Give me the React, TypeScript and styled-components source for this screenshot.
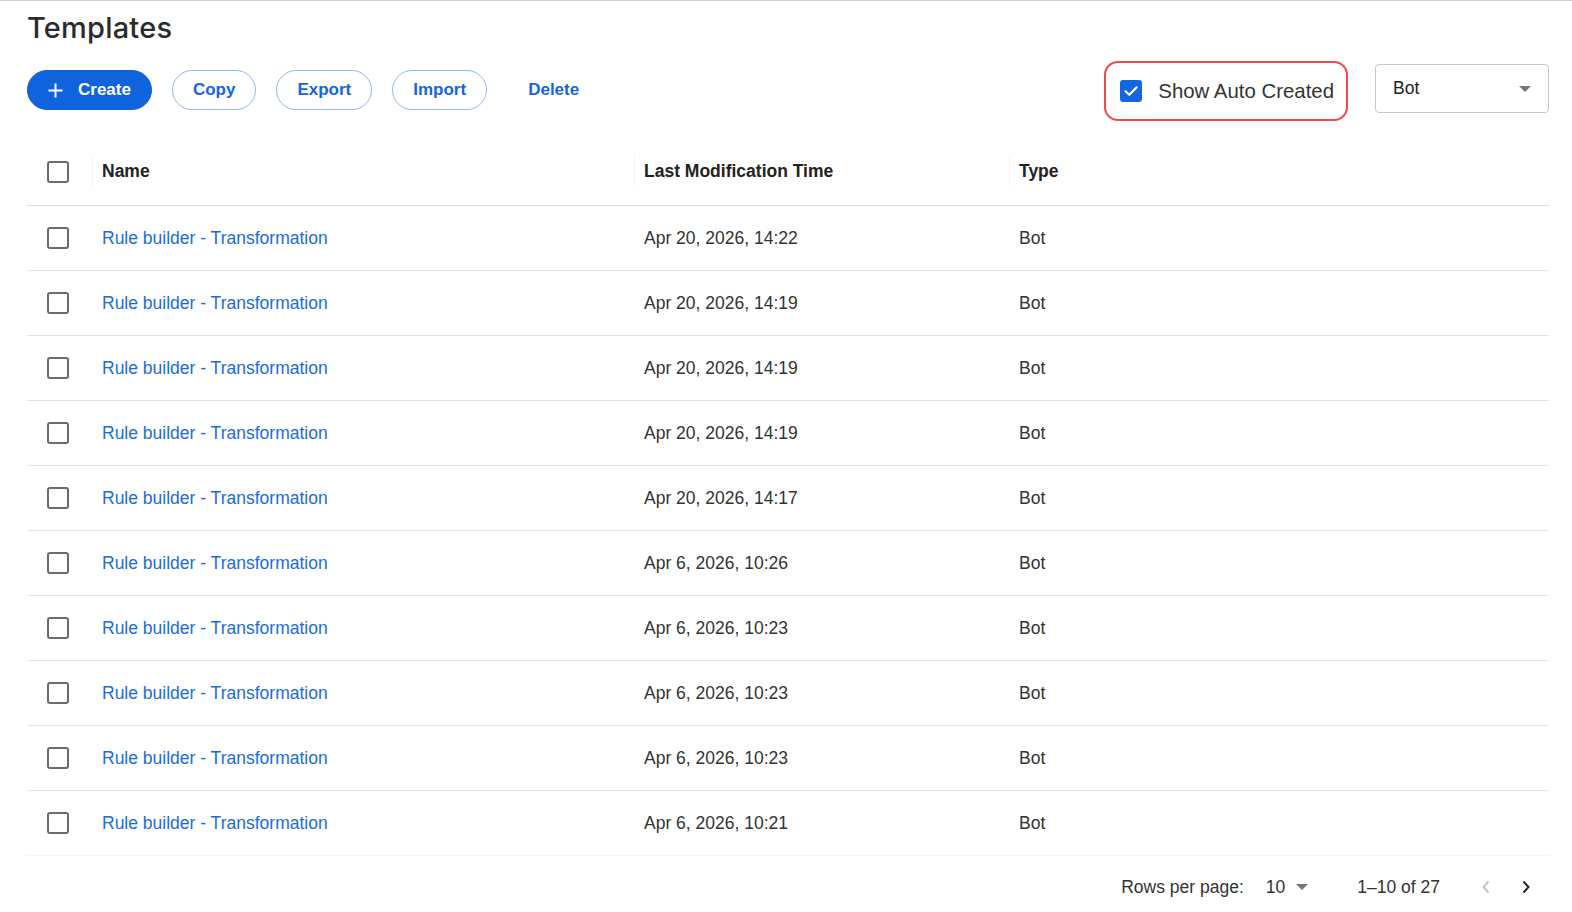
import React from 'react';
import styled, { createGlobalStyle } from 'styled-components';

const GlobalStyle = createGlobalStyle`
    html, body {
        margin: 0;
        padding: 0;
        background: #fff;
        font-family: "Liberation Sans", Arial, sans-serif;
        color: #333;
        overflow: hidden;
    }
    * { box-sizing: border-box; }
`;

interface TemplateRow {
    name: string;
    modified: string;
    type: string;
}

const rows: TemplateRow[] = [
    { name: 'Rule builder - Transformation', modified: 'Apr 20, 2026, 14:22', type: 'Bot' },
    { name: 'Rule builder - Transformation', modified: 'Apr 20, 2026, 14:19', type: 'Bot' },
    { name: 'Rule builder - Transformation', modified: 'Apr 20, 2026, 14:19', type: 'Bot' },
    { name: 'Rule builder - Transformation', modified: 'Apr 20, 2026, 14:19', type: 'Bot' },
    { name: 'Rule builder - Transformation', modified: 'Apr 20, 2026, 14:17', type: 'Bot' },
    { name: 'Rule builder - Transformation', modified: 'Apr 6, 2026, 10:26', type: 'Bot' },
    { name: 'Rule builder - Transformation', modified: 'Apr 6, 2026, 10:23', type: 'Bot' },
    { name: 'Rule builder - Transformation', modified: 'Apr 6, 2026, 10:23', type: 'Bot' },
    { name: 'Rule builder - Transformation', modified: 'Apr 6, 2026, 10:23', type: 'Bot' },
    { name: 'Rule builder - Transformation', modified: 'Apr 6, 2026, 10:21', type: 'Bot' },
];

const Page = styled.div`
    border-top: 1px solid #d0d0d0;
    padding: 0 23px 0 27px;
`;

const Title = styled.h1`
    margin: 0;
    height: 60px;
    padding-bottom: 8px;
    line-height: 54px;
    font-family: Inter, Lato, sans-serif;
    font-weight: 500;
    font-size: 29px;
    color: #2b2b2b;
    letter-spacing: 0.2px;
`;

const Toolbar = styled.div`
    display: flex;
    align-items: flex-start;
    height: 60px;
`;

const ButtonGroup = styled.div`
    display: flex;
    align-items: center;
    gap: 20px;
    flex: 1;
    margin-top: 9px;
`;

const Button = styled.button<{ $variant: 'primary' | 'outline' | 'text' }>`
    display: inline-flex;
    align-items: center;
    gap: 15px;
    height: 40px;
    padding: 0 20px;
    border-radius: 20px;
    font-family: "Liberation Sans", Arial, sans-serif;
    font-weight: 700;
    font-size: 17px;
    cursor: pointer;
    background: ${(p) => (p.$variant === 'primary' ? '#0f63dd' : 'transparent')};
    color: ${(p) => (p.$variant === 'primary' ? '#fff' : '#1466dc')};
    border: 1px solid ${(p) => (p.$variant === 'outline' ? '#93b8f0' : p.$variant === 'primary' ? '#0f63dd' : 'transparent')};
`;

const AutoCreatedBox = styled.label`
    display: flex;
    align-items: center;
    gap: 16px;
    height: 60px;
    padding: 0 12px 0 14px;
    border: 2px solid #ec4a4f;
    border-radius: 14px;
    font-size: 20.4px;
    color: #333;
    cursor: pointer;
`;

const Checkbox = styled.span<{ $checked?: boolean }>`
    display: inline-flex;
    align-items: center;
    justify-content: center;
    width: 22px;
    height: 22px;
    flex: none;
    border-radius: 3px;
    border: 2px solid ${(p) => (p.$checked ? '#1366de' : '#6b6b6b')};
    background: ${(p) => (p.$checked ? '#1366de' : '#fff')};
`;

const Select = styled.div`
    display: flex;
    align-items: center;
    justify-content: space-between;
    width: 174px;
    height: 49px;
    margin: 3px 0 0 27px;
    padding: 0 17px;
    border: 1px solid #c9c9c9;
    border-radius: 4px;
    font-size: 17.5px;
    color: #222;
`;

const Caret = styled.span`
    width: 0;
    height: 0;
    border-left: 6px solid transparent;
    border-right: 6px solid transparent;
    border-top: 6px solid #777;
`;

const Table = styled.div`
    margin-top: 20px;
`;

const Row = styled.div<{ $header?: boolean }>`
    display: grid;
    grid-template-columns: 65px 542px 375px 1fr;
    height: 65px;
    align-items: center;
    padding-bottom: ${(p) => (p.$header ? 3 : 0)}px;
    border-bottom: 1px solid ${(p) => (p.$header ? '#dedede' : '#e3e3e3')};
    font-size: 17.5px;
    font-weight: ${(p) => (p.$header ? 700 : 400)};
    color: ${(p) => (p.$header ? '#222' : '#333')};

    &:last-child {
        border-bottom-color: #f5f5f5;
    }
`;

const Cell = styled.div<{ $divider?: boolean }>`
    position: relative;
    padding-left: 10px;
    white-space: nowrap;

    ${(p) => p.$divider && `
        &::before {
            content: '';
            position: absolute;
            left: 0;
            top: -5px;
            bottom: -5px;
            border-left: 1px solid #f3f3f3;
        }
    `}
`;

const CheckCell = styled.div`
    display: flex;
    align-items: center;
    padding-left: 20px;
`;

const NameLink = styled.a`
    color: #1a6cde;
    text-decoration: none;
    cursor: pointer;
`;

const Pagination = styled.div`
    display: flex;
    align-items: center;
    justify-content: flex-end;
    height: 56px;
    padding: 6px 3px 0 0;
    font-size: 17.5px;
    color: #333;
`;

const RowsPerPage = styled.div`
    display: flex;
    align-items: center;
    gap: 11px;
    margin-left: 22px;
    margin-right: 49px;
`;

const PageNavGroup = styled.div`
    display: flex;
    align-items: center;
    margin-left: 26px;
`;

const PageNav = styled.button<{ $disabled?: boolean }>`
    display: inline-flex;
    align-items: center;
    justify-content: center;
    width: 40px;
    height: 40px;
    border: none;
    background: transparent;
    color: ${(p) => (p.$disabled ? '#c4c4c4' : '#222')};
    cursor: pointer;
`;

const CheckMark: React.FC = () => (
    <svg width='16' height='16' viewBox='0 0 16 16'>
        <path d='M2.5 8.2 L6.3 11.8 L13.5 4.4' fill='none' stroke='#fff' strokeWidth='2.2' strokeLinecap='round' strokeLinejoin='round' />
    </svg>
);

const PlusIcon: React.FC = () => (
    <svg width='15' height='15' viewBox='0 0 15 15'>
        <path d='M7.5 0.5 V14.5 M0.5 7.5 H14.5' stroke='#fff' strokeWidth='2' />
    </svg>
);

const Chevron: React.FC<{ dir: 'left' | 'right' }> = ({ dir }) => (
    <svg width='10' height='14' viewBox='0 0 10 14'>
        <path
            d={dir === 'left' ? 'M7.5 1.5 L2.5 7 L7.5 12.5' : 'M2.5 1.5 L7.5 7 L2.5 12.5'}
            fill='none' stroke='currentColor' strokeWidth='2'
        />
    </svg>
);

const App: React.FC = () => {
    return (
        <Page>
            <GlobalStyle />
            <Title>Templates</Title>

            <Toolbar>
                <ButtonGroup>
                    <Button $variant='primary'>
                        <PlusIcon />
                        Create
                    </Button>
                    <Button $variant='outline'>Copy</Button>
                    <Button $variant='outline'>Export</Button>
                    <Button $variant='outline'>Import</Button>
                    <Button $variant='text'>Delete</Button>
                </ButtonGroup>

                <AutoCreatedBox>
                    <Checkbox $checked>
                        <CheckMark />
                    </Checkbox>
                    Show Auto Created
                </AutoCreatedBox>

                <Select>
                    <span>Bot</span>
                    <Caret />
                </Select>
            </Toolbar>

            <Table>
                <Row $header>
                    <CheckCell>
                        <Checkbox />
                    </CheckCell>
                    <Cell $divider>Name</Cell>
                    <Cell $divider>Last Modification Time</Cell>
                    <Cell $divider>Type</Cell>
                </Row>
                {rows.map((row, i) => (
                    <Row key={i}>
                        <CheckCell>
                            <Checkbox />
                        </CheckCell>
                        <Cell>
                            <NameLink>{row.name}</NameLink>
                        </Cell>
                        <Cell>{row.modified}</Cell>
                        <Cell>{row.type}</Cell>
                    </Row>
                ))}
            </Table>

            <Pagination>
                <span>Rows per page:</span>
                <RowsPerPage>
                    <span>10</span>
                    <Caret />
                </RowsPerPage>
                <span>1–10 of 27</span>
                <PageNavGroup>
                    <PageNav $disabled>
                        <Chevron dir='left' />
                    </PageNav>
                    <PageNav>
                        <Chevron dir='right' />
                    </PageNav>
                </PageNavGroup>
            </Pagination>
        </Page>
    );
};

export default App;
